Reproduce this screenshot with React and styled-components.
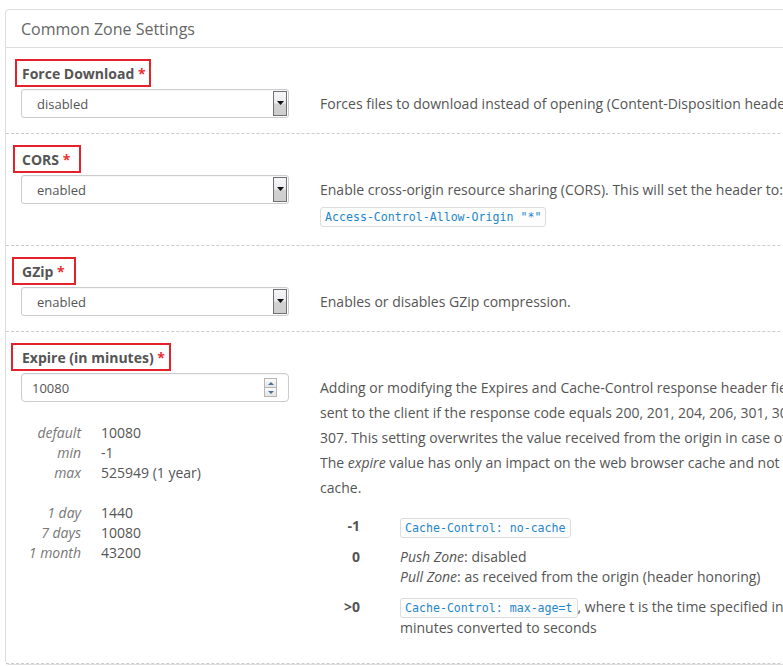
import React from 'react';
import styled, { createGlobalStyle } from 'styled-components';

const GlobalStyle = createGlobalStyle`
  html, body {
    margin: 0;
    background: #fff;
    overflow: hidden;
  }
  body {
    font-family: "Open Sans", "Noto Sans", sans-serif;
    font-size: 14px;
    color: #555;
  }
`;

const Select = ({ value }) => (
  <SelectBox>
    <SelectValue>{value}</SelectValue>
    <DropButton>
      <svg width="7" height="4" viewBox="0 0 7 4">
        <path d="M0 0h7L3.5 4z" fill="#111" />
      </svg>
    </DropButton>
  </SelectBox>
);

const NumberInput = ({ value }) => (
  <InputBox>
    <SelectValue $pad={10}>{value}</SelectValue>
    <Spinner>
      <SpinHalf>
        <svg width="6" height="3" viewBox="0 0 6 3">
          <path d="M0 3h6L3 0z" fill="#4f6f9f" />
        </svg>
      </SpinHalf>
      <SpinHalf>
        <svg width="6" height="3" viewBox="0 0 6 3">
          <path d="M0 0h6L3 3z" fill="#4f6f9f" />
        </svg>
      </SpinHalf>
    </Spinner>
  </InputBox>
);

const Label = ({ children, l, r }) => (
  <LabelLine>
    <LabelBox $l={l} $r={r}>
      {children} <Star>*</Star>
    </LabelBox>
  </LabelLine>
);

const limits = [
  ['default', '10080'],
  ['min', '-1'],
  ['max', '525949 (1 year)'],
  [null, null],
  ['1 day', '1440'],
  ['7 days', '10080'],
  ['1 month', '43200'],
];

const App = () => (
  <>
    <GlobalStyle />
    <Panel>
      <Heading>Common Zone Settings</Heading>

      <Row>
        <Label l={5} r={3}>Force Download</Label>
        <Fields>
          <Select value="disabled" />
          <Help>Forces files to download instead of opening (Content-Disposition header: attachment).</Help>
        </Fields>
      </Row>

      <Row $bottom={18}>
        <Label l={7} r={9}>CORS</Label>
        <Fields>
          <Select value="enabled" />
          <Help>
            Enable cross-origin resource sharing (CORS). This will set the header to:
            <CodeLine>
              <Code>Access-Control-Allow-Origin "*"</Code>
            </CodeLine>
          </Help>
        </Fields>
      </Row>

      <Row>
        <Label l={8} r={9}>GZip</Label>
        <Fields>
          <Select value="enabled" />
          <Help>Enables or disables GZip compression.</Help>
        </Fields>
      </Row>

      <Row $bottom={25}>
        <Label l={9} r={4}>Expire (in minutes)</Label>
        <Fields>
          <div>
            <NumberInput value="10080" />
            <Limits>
              {limits.map(([k, v], i) => (
                <React.Fragment key={i}>
                  <LimitKey>{k || '\u00a0'}</LimitKey>
                  <LimitValue>{v || '\u00a0'}</LimitValue>
                </React.Fragment>
              ))}
            </Limits>
          </div>
          <Help>
            Adding or modifying the Expires and Cache-Control response header fields that are<br />
            sent to the client if the response code equals 200, 201, 204, 206, 301, 302, 303, 304, or<br />
            307. This setting overwrites the value received from the origin in case of a Pull Zone.<br />
            The <em>expire</em> value has only an impact on the web browser cache and not the edge server<br />
            cache.
            <ValueList>
              <Term>-1</Term>
              <Desc><Code>Cache-Control: no-cache</Code></Desc>
              <Term>0</Term>
              <Desc>
                <em>Push Zone</em>: disabled<br />
                <em>Pull Zone</em>: as received from the origin (header honoring)
              </Desc>
              <Term>&gt;0</Term>
              <Desc>
                <Code>Cache-Control: max-age=t</Code>, where t is the time specified in<br />
                minutes converted to seconds
              </Desc>
            </ValueList>
          </Help>
        </Fields>
      </Row>
    </Panel>
  </>
);

const Panel = styled.div`
  margin: 9px 0 0 5px;
  width: 1100px;
  border: 1px solid #ddd;
  border-radius: 4px;
  background: #fff;
`;

const Heading = styled.div`
  padding: 9px 15px 8px;
  font-size: 16px;
  line-height: 20px;
  color: #666;
  border-bottom: 1px solid #ddd;
`;

const Row = styled.div`
  padding: 11px 15px ${p => p.$bottom || 15}px;
  border-bottom: 1px dashed #ccc;
`;

const LabelLine = styled.div`
  height: 28px;
  margin-bottom: 2px;
`;

const LabelBox = styled.span`
  display: inline-block;
  margin-left: ${p => -(p.$l + 1)}px;
  padding: 3px ${p => p.$r}px 1px ${p => p.$l}px;
  border: 2px solid #e3222b;
  font-size: 14px;
  font-weight: 700;
  line-height: 20px;
  color: #555;
`;

const Star = styled.span`
  color: #e83030;
`;

const Fields = styled.div`
  display: grid;
  grid-template-columns: 268px 1fr;
  column-gap: 31px;
  align-items: start;
`;

const SelectBox = styled.div`
  display: flex;
  align-items: center;
  height: 29px;
  box-sizing: border-box;
  border: 1px solid #ccc;
  border-radius: 3px;
  background: #fff;
  box-shadow: inset 0 1px 1px rgba(0, 0, 0, 0.04);
`;

const InputBox = styled(SelectBox)`
  border-radius: 4px;
`;

const SelectValue = styled.span`
  flex: 1;
  padding-left: ${p => p.$pad || 15}px;
  font-size: 13px;
  color: #555;
`;

const DropButton = styled.span`
  display: flex;
  align-items: center;
  justify-content: center;
  width: 14px;
  height: 25px;
  margin-right: 1px;
  padding-bottom: 2px;
  box-sizing: border-box;
  border: 1px solid #707070;
  background: linear-gradient(#f6f6f8 0%, #e9eaee 48%, #d2d2d2 52%, #cdcdcd 100%);
`;

const Spinner = styled.span`
  display: flex;
  flex-direction: column;
  width: 13px;
  margin-right: 11px;
`;

const SpinHalf = styled.span`
  display: flex;
  align-items: center;
  justify-content: center;
  height: 8px;
  border: 1px solid #b5b5b5;
  background: linear-gradient(#fbfbfb, #e4e4e4);
  & + & {
    border-top: none;
  }
`;

const Limits = styled.div`
  display: grid;
  grid-template-columns: 60px 1fr;
  column-gap: 20px;
  margin-top: 21px;
  line-height: 20px;
  font-size: 14px;
`;

const LimitKey = styled.div`
  text-align: right;
  font-style: italic;
  color: #777;
`;

const LimitValue = styled.div`
  color: #555;
`;

const Help = styled.div`
  padding-top: 2px;
  font-size: 14px;
  line-height: 25px;
  color: #555;
  white-space: nowrap;
`;

const CodeLine = styled.div`
  margin-top: 4px;
  line-height: 20px;
`;

const Code = styled.code`
  display: inline-block;
  padding: 2px 4px;
  border: 1px solid #ddd;
  border-radius: 3px;
  background: #fdfdfd;
  font-family: "DejaVu Sans Mono", "Liberation Mono", monospace;
  font-size: 11.6px;
  line-height: 14px;
  color: #1f86c9;
  vertical-align: middle;
`;

const ValueList = styled.div`
  display: grid;
  grid-template-columns: 40px 1fr;
  column-gap: 40px;
  row-gap: 9px;
  margin-top: 16px;
  line-height: 20.5px;
`;

const Term = styled.div`
  text-align: right;
  font-weight: 700;
  color: #555;
`;

const Desc = styled.div`
  color: #555;
`;

export default App;
